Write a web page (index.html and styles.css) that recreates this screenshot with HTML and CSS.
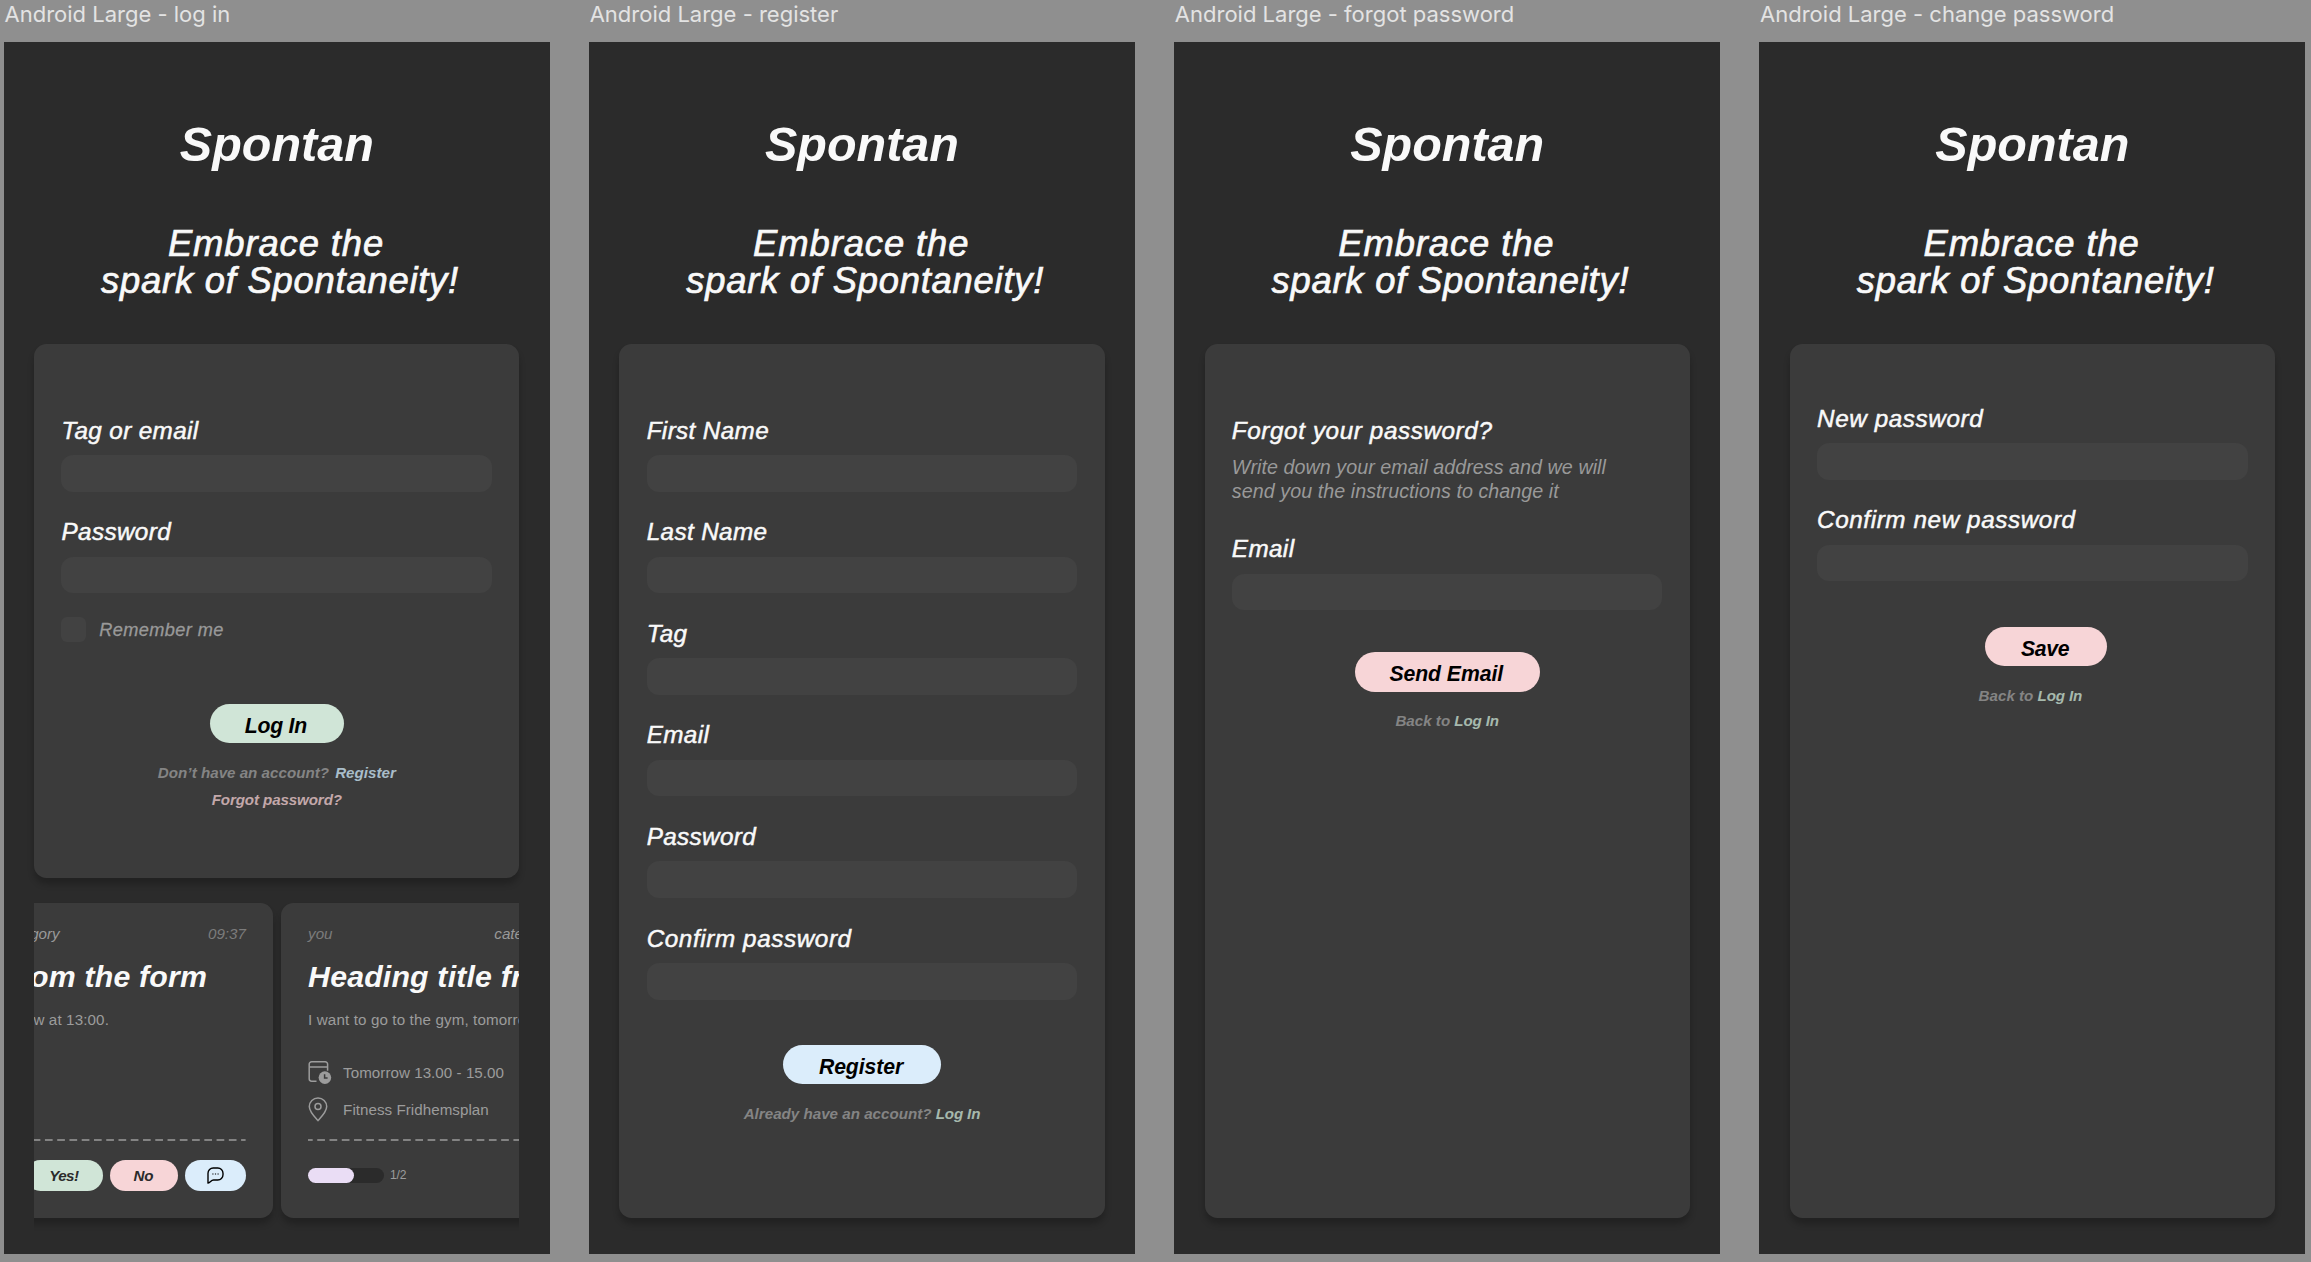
FILE: index.html
```html
<!DOCTYPE html>
<html lang="en">
<head>
<meta charset="utf-8">
<title>Spontan</title>
<link rel="stylesheet" href="styles.css">
</head>
<body>
<svg class="sprite" aria-hidden="true">
  <symbol id="calendar" viewBox="0 0 24 24">
    <path d="M8.5 20.2H3.6a2.4 2.4 0 0 1-2.4-2.4V3.2A2.4 2.4 0 0 1 3.6.8h13.6a2.4 2.4 0 0 1 2.4 2.4v6.6M1.2 6h18.4" fill="none" stroke="currentColor" stroke-width="1.5"/>
    <circle cx="16.9" cy="16.6" r="6.3" fill="currentColor"/>
    <path d="M16.6 13.2v3.9h3" fill="none" stroke="#3b3b3b" stroke-width="1.5"/>
  </symbol>
  <symbol id="pin" viewBox="0 0 20 25">
    <path d="M10 23.6C7.2 20.6 1.3 14.7 1.3 9.5a8.7 8.6 0 0 1 17.4 0C18.7 14.7 12.8 20.6 10 23.6Z" fill="none" stroke="currentColor" stroke-width="1.5"/>
    <circle cx="10" cy="9.6" r="3" fill="none" stroke="currentColor" stroke-width="1.5"/>
  </symbol>
  <symbol id="chat" viewBox="0 0 17 17">
    <path d="M1 16V6.200A5.200 5.200 0 0 1 6.200 1h4.600A5.200 5.200 0 0 1 16 6.200v1.600A5.200 5.200 0 0 1 10.800 13H6.500C4 13 3.500 15.400 1 16Z" fill="none" stroke="#000" stroke-width="1.4" stroke-linejoin="round"/>
    <path d="M5.300 7h1.200M7.900 7h1.200M10.500 7h1.200" stroke="#000" stroke-width="1.100"/>
  </symbol>
</svg>

<main class="board">
  <section class="artboard">
    <h2 class="artboard-name">Android Large - log in</h2>
    <div class="screen">
      <h1 class="logo">Spontan</h1>
      <p class="tagline"><span class="tag-a">Embrace the</span><span class="tag-b">spark of Spontaneity!</span></p>
      <form class="card card-login">
        <label class="label">Tag or email</label>
        <div class="input"></div>
        <label class="label">Password</label>
        <div class="input"></div>
        <div class="remember"><span class="checkbox"></span><span class="remember-text">Remember me</span></div>
        <div class="button green btn-login">Log In</div>
        <p class="hint">Don’t have an account? <a class="blue-link">Register</a></p>
        <p class="hint hint-forgot"><a class="pink-link">Forgot password?</a></p>
      </form>
      <div class="carousel">
        <div class="track">
          <article class="event">
            <div class="event-head"><span>you</span><span class="category">category</span><span class="time">09:37</span></div>
            <h3 class="event-title">Heading title from the form</h3>
            <p class="event-text">I want to go to the gym, tomorrow at 13:00.</p>
            <div class="meta meta-date"><svg class="icon-cal"><use href="#calendar"/></svg><span>Tomorrow 13.00 - 15.00</span></div>
            <div class="meta meta-place"><svg class="icon-pin"><use href="#pin"/></svg><span>Fitness Fridhemsplan</span></div>
            <svg class="divider"><line x1="0" y1="1" x2="430.6" y2="1"/></svg>
            <div class="event-foot">
              <div class="progress"><div class="progress-fill"></div></div><span class="count">1/2</span>
              <div class="chip green chip-yes">Yes!</div><div class="chip pink chip-no">No</div>
              <div class="chip blue chip-chat"><svg class="icon-chat"><use href="#chat"/></svg></div>
            </div>
          </article>
          <article class="event">
            <div class="event-head"><span>you</span><span class="category">category</span><span class="time">09:37</span></div>
            <h3 class="event-title">Heading title from the form</h3>
            <p class="event-text">I want to go to the gym, tomorrow at 13:00.</p>
            <div class="meta meta-date"><svg class="icon-cal"><use href="#calendar"/></svg><span>Tomorrow 13.00 - 15.00</span></div>
            <div class="meta meta-place"><svg class="icon-pin"><use href="#pin"/></svg><span>Fitness Fridhemsplan</span></div>
            <svg class="divider"><line x1="0" y1="1" x2="430.6" y2="1"/></svg>
            <div class="event-foot">
              <div class="progress"><div class="progress-fill"></div></div><span class="count">1/2</span>
            </div>
          </article>
        </div>
      </div>
    </div>
  </section>

  <section class="artboard">
    <h2 class="artboard-name">Android Large - register</h2>
    <div class="screen">
      <h1 class="logo">Spontan</h1>
      <p class="tagline"><span class="tag-a">Embrace the</span><span class="tag-b">spark of Spontaneity!</span></p>
      <form class="card">
        <label class="label">First Name</label>
        <div class="input"></div>
        <label class="label">Last Name</label>
        <div class="input"></div>
        <label class="label">Tag</label>
        <div class="input"></div>
        <label class="label">Email</label>
        <div class="input"></div>
        <label class="label">Password</label>
        <div class="input"></div>
        <label class="label wide">Confirm password</label>
        <div class="input"></div>
        <div class="button blue btn-register">Register</div>
        <p class="hint">Already have an account? <a class="green-link">Log In</a></p>
      </form>
    </div>
  </section>

  <section class="artboard">
    <h2 class="artboard-name">Android Large - forgot password</h2>
    <div class="screen">
      <h1 class="logo">Spontan</h1>
      <p class="tagline"><span class="tag-a">Embrace the</span><span class="tag-b">spark of Spontaneity!</span></p>
      <form class="card">
        <label class="label wide">Forgot your password?</label>
        <p class="help">Write down your email address and we will<br>send you the instructions to change it</p>
        <label class="label">Email</label>
        <div class="input"></div>
        <div class="button pink btn-send">Send Email</div>
        <p class="hint">Back to <a class="green-link">Log In</a></p>
      </form>
    </div>
  </section>

  <section class="artboard">
    <h2 class="artboard-name">Android Large - change password</h2>
    <div class="screen">
      <h1 class="logo">Spontan</h1>
      <p class="tagline"><span class="tag-a">Embrace the</span><span class="tag-b">spark of Spontaneity!</span></p>
      <form class="card card-change">
        <label class="label wide">New password</label>
        <div class="input"></div>
        <label class="label wide">Confirm new password</label>
        <div class="input"></div>
        <div class="button pink btn-save">Save</div>
        <p class="hint hint-change">Back to <a class="green-link">Log In</a></p>
      </form>
    </div>
  </section>
</main>
</body>
</html>
```
FILE: styles.css
```css
* { box-sizing: border-box; margin: 0; padding: 0; }

body {
  width: 2311px;
  height: 1262px;
  overflow: hidden;
  background: #8f8f8f;
  font-family: "Liberation Sans", Arial, sans-serif;
  font-style: italic;
  white-space: nowrap;
}

.sprite { display: none; }

.board { display: flex; gap: 39.4px; padding-left: 3.9px; }
.artboard { flex: none; width: 545.8px; }

.artboard-name {
  height: 41.6px;
  padding-left: 0.6px;
  font: normal 400 22px/28px Inter, sans-serif;
  color: #e3e3e3;
}

.screen {
  display: flex;
  flex-direction: column;
  height: 1212.4px;
  padding: 74.7px 30.3px 36.4px;
  background: #2b2b2b;
}

.logo {
  font-size: 48.5px;
  line-height: 56px;
  font-weight: 700;
  text-align: center;
  color: #f9f9f9;
}

.tagline {
  display: flex;
  flex-direction: column;
  align-items: center;
  margin-top: 53.8px;
  font-size: 36.4px;
  line-height: 36.7px;
  color: #f9f9f9;
  -webkit-text-stroke: 0.7px #f9f9f9;
}
.tag-a { letter-spacing: 0.9px; margin-right: 1.5px; }
.tag-b { letter-spacing: 0.76px; margin-left: 6.5px; }

.card {
  display: flex;
  flex-direction: column;
  flex: 1;
  margin-top: 45px;
  padding: 71.1px 27.3px 0;
  border-radius: 12.5px;
  background: #3b3b3b;
  box-shadow: 0 6px 6px rgba(0, 0, 0, 0.22);
}
.card-login { flex: none; height: 534px; }
.card-change { padding-top: 59.1px; }

.label {
  font-size: 24.26px;
  line-height: 29px;
  letter-spacing: 0.38px;
  color: #f9f9f9;
  -webkit-text-stroke: 0.5px #f9f9f9;
}
.label.wide { letter-spacing: 0.6px; }

.input {
  height: 36.5px;
  margin-top: 10.5px;
  border-radius: 12.1px;
  background: #424242;
}
.input + .label { margin-top: 25.6px; }

.help {
  margin-top: 10.4px;
  font-size: 19.7px;
  line-height: 24px;
  letter-spacing: 0.05px;
  color: #999;
}
.help + .label { margin-top: 31.2px; }

.remember { display: flex; gap: 13.5px; margin-top: 24.3px; height: 24.3px; }
.checkbox { width: 24.3px; height: 24.3px; border-radius: 6px; background: #424242; }
.remember-text {
  font-size: 18.2px;
  line-height: 27px;
  letter-spacing: 0.38px;
  color: #999;
  -webkit-text-stroke: 0.3px #999;
}

.button {
  align-self: center;
  height: 39.7px;
  padding-right: 1.8px;
  border-radius: 20px;
  font-size: 21.2px;
  line-height: 43.3px;
  font-weight: 700;
  letter-spacing: -0.05px;
  text-align: center;
  color: #000;
}
.btn-login { width: 133.7px; margin-top: 61.8px; letter-spacing: -0.2px; }
.btn-register { width: 157.6px; margin-top: 45.2px; }
.btn-send { width: 185.2px; margin-top: 41.7px; }
.btn-save { width: 121.6px; margin: 45.6px 0 0 27.2px; letter-spacing: -0.3px; }

.green { background: #d0e5d7; }
.blue { background: #dbedfb; }
.pink { background: #f7d5d7; }

.hint {
  margin-top: 19.5px;
  font-size: 15.16px;
  line-height: 20px;
  font-weight: 700;
  text-align: center;
  color: #848484;
}
.hint-forgot { margin-top: 7.3px; letter-spacing: -0.12px; }
.hint-change { margin-right: 4px; }
.blue-link { color: #a9bdc9; margin-left: 2px; }
.green-link { color: #a6b9ad; letter-spacing: -0.15px; }
.pink-link { color: #c3a8aa; }

/* Horizontally clipped strip of event cards */
.carousel {
  height: 315px;
  margin-top: 24.3px;
  overflow-x: clip;
  overflow-y: visible;
}
.track { display: flex; gap: 7.6px; margin-left: -246.2px; }

.event {
  flex: none;
  width: 485.2px;
  height: 315px;
  padding: 21.2px 27.3px 0;
  border-radius: 12.5px;
  background: #3b3b3b;
  box-shadow: 0 6px 6px rgba(0, 0, 0, 0.22);
  font-size: 15.16px;
  line-height: 20px;
  color: #9c9c9c;
}
.event-head { display: grid; grid-template-columns: 1fr auto 1fr; color: #7c7c7c; }
.category { color: #999; }
.time { text-align: right; }

.event-title {
  margin-top: 14.7px;
  font-size: 30.3px;
  line-height: 36px;
  font-weight: 700;
  letter-spacing: 0.17px;
  color: #f9f9f9;
}
.event-text { margin-top: 15.6px; font-style: normal; letter-spacing: 0.13px; }

.meta { display: flex; align-items: center; height: 20px; font-style: normal; letter-spacing: 0.04px; }
.meta-date { margin-top: 33px; }
.meta-place { margin-top: 16.3px; }
.icon-cal { width: 24px; height: 24px; margin-right: 11px; }
.icon-pin { width: 20px; height: 25px; margin-right: 15px; }

.divider { display: block; width: 430.6px; height: 2px; margin-top: 19px; }
.divider line { stroke: #9c9c9c; stroke-width: 1.6; stroke-dasharray: 7.69 4.57; stroke-dashoffset: 3; }

.event-foot { display: flex; align-items: center; height: 30.6px; margin-top: 19.5px; }
.progress { width: 76px; height: 15.4px; border-radius: 8px; background: #2b2b2b; }
.progress-fill { width: 60%; height: 100%; border-radius: 8px; background: #eaddf5; }
.count { margin-left: 6px; font-size: 12.1px; font-style: normal; letter-spacing: -0.2px; }

.chip {
  height: 30.6px;
  border-radius: 16px;
  line-height: 32.8px;
  font-weight: 700;
  text-align: center;
  color: #2b2b2b;
}
.chip-yes { width: 78.3px; margin-left: auto; letter-spacing: -0.6px; }
.chip-no { width: 67.4px; margin-left: 7.3px; padding-right: 1px; }
.chip-chat { display: grid; place-items: center; width: 61px; margin-left: 7.2px; }
.icon-chat { width: 17px; height: 17px; }
```
